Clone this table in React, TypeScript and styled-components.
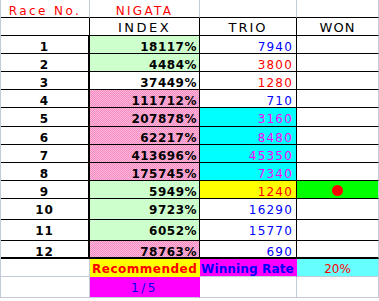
import { FunctionComponent } from "react";
import styled, { createGlobalStyle } from "styled-components";

const GlobalStyle = createGlobalStyle`
    html, body {
        margin: 0;
        padding: 0;
        background: #ffffff;
    }
    body {
        font-family: "DejaVu Sans", "Noto Sans", sans-serif;
        font-size: 12px;
    }
`;

const GRID = "#c3cbdb";
const BLACK = "#000000";
const PINK =
    "repeating-conic-gradient(#f38cc0 0 25%, #ffb6da 0 50%) 0 0 / 2px 2px";

type Align = "left" | "center" | "right";

interface CellProps {
    $bg?: string;
    $color?: string;
    $align?: Align;
    $bold?: boolean;
    $size?: number;
    $spacing?: number;
    $pad?: number;
    $top?: number;
    $rightColor?: string;
    $rightWidth?: number;
    $bottomColor?: string;
    $bottomWidth?: number;
}

const Sheet = styled.div`
    display: grid;
    grid-template-columns: 89px 110px 97px 82px;
    grid-template-rows: 18px 18px 18px 18px 18px 18px 19px 18px 18px 18px 18px 21px 21px 18px 18px 21px;
    width: 379px;
    border-left: 1px solid ${GRID};
    box-sizing: border-box;
`;

const Cell = styled.div<CellProps>`
    display: flex;
    align-items: flex-start;
    justify-content: ${(p) =>
        p.$align === "right"
            ? "flex-end"
            : p.$align === "left"
            ? "flex-start"
            : "center"};
    box-sizing: border-box;
    overflow: hidden;
    white-space: nowrap;
    line-height: 14px;
    padding-top: ${(p) => (p.$top === undefined ? 4 : p.$top)}px;
    background: ${(p) => p.$bg || "#ffffff"};
    color: ${(p) => p.$color || "#000000"};
    font-weight: ${(p) => (p.$bold ? 700 : 400)};
    font-size: ${(p) => p.$size || 12}px;
    letter-spacing: ${(p) => (p.$spacing === undefined ? 1 : p.$spacing)}px;
    padding-right: ${(p) => p.$pad || 0}px;
    border-right: ${(p) => p.$rightWidth || 1}px solid
        ${(p) => p.$rightColor || GRID};
    border-bottom: ${(p) => p.$bottomWidth || 1}px solid
        ${(p) => p.$bottomColor || GRID};
`;

const Dot = styled.span`
    display: block;
    width: 11px;
    height: 11px;
    border-radius: 50%;
    background: #ff0000;
`;

interface RaceRow {
    race: number;
    index: string;
    indexBg: string;
    trio: string;
    trioColor: string;
    trioBg?: string;
    won?: boolean;
}

const GREEN = "#ccffcc";
const WHITE = "#ffffff";
const CYAN = "#00ffff";

const races: RaceRow[] = [
    { race: 1, index: "18117%", indexBg: GREEN, trio: "7940", trioColor: "#0000ff" },
    { race: 2, index: "4484%", indexBg: GREEN, trio: "3800", trioColor: "#ff0000" },
    { race: 3, index: "37449%", indexBg: WHITE, trio: "1280", trioColor: "#ff0000" },
    { race: 4, index: "111712%", indexBg: PINK, trio: "710", trioColor: "#0000ff" },
    { race: 5, index: "207878%", indexBg: PINK, trio: "3160", trioColor: "#ff00ff", trioBg: CYAN },
    { race: 6, index: "62217%", indexBg: PINK, trio: "8480", trioColor: "#ff00ff", trioBg: CYAN },
    { race: 7, index: "413696%", indexBg: PINK, trio: "45350", trioColor: "#ff00ff", trioBg: CYAN },
    { race: 8, index: "175745%", indexBg: PINK, trio: "7340", trioColor: "#ff00ff", trioBg: CYAN },
    { race: 9, index: "5949%", indexBg: GREEN, trio: "1240", trioColor: "#ff0000", trioBg: "#ffff00", won: true },
    { race: 10, index: "9723%", indexBg: GREEN, trio: "16290", trioColor: "#0000ff" },
    { race: 11, index: "6052%", indexBg: GREEN, trio: "15770", trioColor: "#0000ff" },
    { race: 12, index: "78763%", indexBg: PINK, trio: "690", trioColor: "#0000ff" },
];

const App: FunctionComponent = () => {
    return (
        <>
            <GlobalStyle />
            <Sheet>
                <Cell $color="#ff0000" $spacing={2.4} $bottomColor={BLACK}>
                    Race No.
                </Cell>
                <Cell $color="#ff0000" $spacing={2.3} $bottomColor={BLACK}>
                    NIGATA
                </Cell>
                <Cell $bottomColor={BLACK} />
                <Cell $bottomColor={BLACK} />

                <Cell $rightColor={BLACK} $bottomColor={BLACK} />
                <Cell $size={13} $top={3} $spacing={2.5} $rightColor={BLACK} $bottomColor={BLACK}>
                    INDEX
                </Cell>
                <Cell $size={13} $top={3} $spacing={2} $rightColor={BLACK} $bottomColor={BLACK}>
                    TRIO
                </Cell>
                <Cell $size={13} $top={3} $spacing={1} $bottomColor={BLACK}>
                    WON
                </Cell>

                {races.map((r) => {
                    const last = r.race === 12;
                    const bottom = last ? 2 : 1;
                    return [
                        <Cell
                            key={`n${r.race}`}
                            $bold
                            $spacing={1}
                            $rightColor={BLACK}
                            $rightWidth={2}
                            $bottomColor={BLACK}
                            $bottomWidth={bottom}
                        >
                            {r.race}
                        </Cell>,
                        <Cell
                            key={`i${r.race}`}
                            $bold
                            $align="right"
                            $spacing={0.5}
                            $pad={2}
                            $bg={r.indexBg}
                            $rightColor={BLACK}
                            $bottomColor={BLACK}
                            $bottomWidth={bottom}
                        >
                            {r.index}
                        </Cell>,
                        <Cell
                            key={`t${r.race}`}
                            $align="right"
                            $spacing={1.2}
                            $pad={3}
                            $bg={r.trioBg}
                            $color={r.trioColor}
                            $rightColor={BLACK}
                            $bottomColor={BLACK}
                            $bottomWidth={bottom}
                        >
                            {r.trio}
                        </Cell>,
                        <Cell
                            key={`w${r.race}`}
                            $bg={r.won ? "#00ff00" : undefined}
                            $bottomColor={BLACK}
                            $bottomWidth={bottom}
                        >
                            {r.won ? <Dot /> : null}
                        </Cell>,
                    ];
                })}

                <Cell />
                <Cell
                    $bold
                    $align="left"
                    $top={3}
                    $spacing={0.5}
                    $bg="#ffff00"
                    $color="#ff0000"
                    $rightColor="transparent"
                    $bottomColor="transparent"
                    style={{ paddingLeft: 2 }}
                >
                    Recommended
                </Cell>
                <Cell
                    $bold
                    $align="left"
                    $top={3}
                    $spacing={0.15}
                    $bg="#ff00ff"
                    $color="#0000ff"
                    $rightColor="transparent"
                    style={{ paddingLeft: 1 }}
                >
                    Winning Rate
                </Cell>
                <Cell $spacing={0} $top={3} $bg="#66ffff" $color="#ff0000">
                    20%
                </Cell>

                <Cell />
                <Cell
                    $spacing={2.5}
                    $bg="#ff00ff"
                    $color="#0000ff"
                    $rightColor="transparent"
                >
                    1/5
                </Cell>
                <Cell />
                <Cell />
            </Sheet>
        </>
    );
};

export default App;
